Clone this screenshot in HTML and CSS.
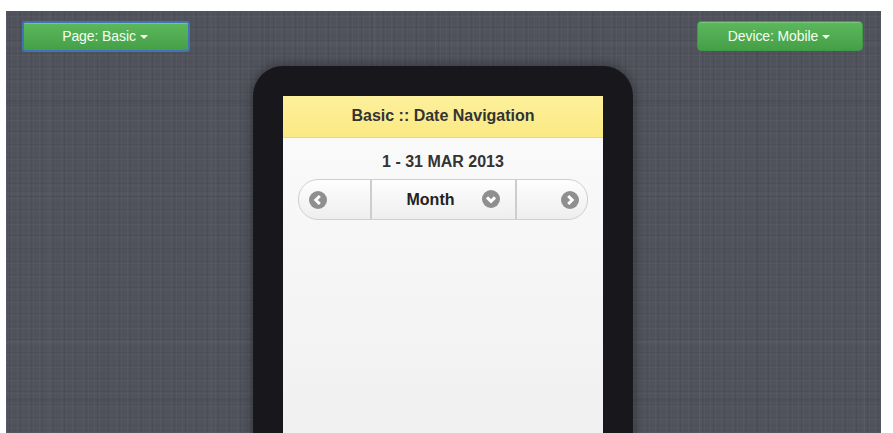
FILE: index.html
```html
<!DOCTYPE html>
<html lang="en">
<head>
<meta charset="utf-8">
<title>Date Navigation</title>
<link rel="stylesheet" href="styles.css">
</head>
<body>
<main class="stage">
  <div class="toolbar">
    <button class="drop drop-focus" type="button">Page: Basic<span class="caret"></span></button>
    <button class="drop" type="button">Device: Mobile<span class="caret"></span></button>
  </div>
  <div class="phone">
    <div class="screen">
      <header class="bar">Basic :: Date Navigation</header>
      <div class="content">
        <div class="range">1 - 31 MAR 2013</div>
        <div class="nav">
          <div class="cell cell-side">
            <svg class="ico" viewBox="0 0 18 18"><circle cx="9" cy="9" r="9"/><path d="M10.8 5 6.8 9l4 4"/></svg>
          </div>
          <div class="cell cell-mid">
            <span class="label">Month</span>
            <svg class="ico ico-mid" viewBox="0 0 18 18"><circle cx="9" cy="9" r="9"/><path d="M5 7.4l4 4 4-4"/></svg>
          </div>
          <div class="cell cell-side cell-end">
            <svg class="ico" viewBox="0 0 18 18"><circle cx="9" cy="9" r="9"/><path d="M7.2 5l4 4-4 4"/></svg>
          </div>
        </div>
      </div>
    </div>
  </div>
</main>
</body>
</html>
```
FILE: styles.css
```css
html, body { margin: 0; height: 433px; overflow: hidden; background: #fff; }
body { padding: 11px 12px 0 6px; box-sizing: border-box; font-family: "Liberation Sans", Arial, sans-serif; }
.stage {
  height: 422px; overflow: hidden; box-sizing: border-box; padding-top: 10px;
  background-color: #50525c;
  background-image:
    repeating-linear-gradient(90deg, rgba(255,255,255,.03) 0 1px, transparent 1px 3px, rgba(0,0,0,.05) 3px 4px, transparent 4px 5px, rgba(255,255,255,.02) 5px 6px, transparent 6px 11px),
    repeating-linear-gradient(0deg, rgba(255,255,255,.025) 0 1px, transparent 1px 2px, rgba(0,0,0,.05) 2px 3px, transparent 3px 7px, rgba(0,0,0,.03) 7px 8px, transparent 8px 13px),
    repeating-linear-gradient(90deg, transparent 0 41px, rgba(255,255,255,.02) 41px 44px, transparent 44px 97px, rgba(0,0,0,.025) 97px 101px, transparent 101px 163px),
    repeating-linear-gradient(0deg, transparent 0 31px, rgba(0,0,0,.03) 31px 35px, transparent 35px 89px, rgba(255,255,255,.02) 89px 92px, transparent 92px 149px);
}
.toolbar { display: flex; justify-content: space-between; align-items: flex-start; padding: 0 18px 0 16px; }
.drop {
  width: 166px; height: 30px; padding: 0 2px 0 0; border: 1px solid #3f9a45; border-radius: 4px;
  background: linear-gradient(#5cb85c, #459f48); color: #f2fff0;
  font: 14px/20px "Liberation Sans", Arial, sans-serif; letter-spacing: -.1px;
  box-shadow: inset 0 1px 0 rgba(255,255,255,.2);
}
.drop-focus { width: 168px; height: 31px; padding-bottom: 1px; border: 2px solid #3f74b5; border-radius: 3px; }
.caret {
  display: inline-block; margin-left: 4px; vertical-align: middle; width: 0; height: 0;
  border-left: 4.5px solid transparent; border-right: 4.5px solid transparent; border-top: 4.5px solid #f2fff0;
}
.phone {
  width: 320px; height: 420px; margin: 14px 0 0 247px; padding: 30px; background: #18181c;
  border-radius: 30px 30px 0 0; box-shadow: 0 0 12px rgba(0,0,0,.4);
}
.screen { height: 100%; background: linear-gradient(#fbfbfb, #f0f0f0 340px); }
.bar {
  height: 41px; line-height: 39px; text-align: center;
  background: linear-gradient(#fdf09c, #fbe982); border-bottom: 1px solid #efd968;
  color: #333; font-size: 16px; font-weight: 700;
}
.content { padding: 14px 15px 0 15px; }
.range { height: 27px; line-height: 20px; text-align: center; color: #333; font-size: 16px; font-weight: 700; }
.nav {
  display: flex; height: 39px; border: 1px solid #cfcfcf; border-radius: 20px;
  background: linear-gradient(#fefefe, #eeeeee); color: #222;
}
.cell { display: flex; align-items: center; box-sizing: border-box; }
.cell-side { width: 71px; padding-left: 10px; }
.cell-end { flex: 1; padding: 0 8px 0 0; justify-content: flex-end; }
.cell-mid {
  position: relative; width: 147px; justify-content: center;
  border-left: 2px solid #cdcdcd; border-right: 2px solid #cdcdcd;
  padding-right: 30px; padding-left: 4px;
}
.label { font-size: 16px; font-weight: 700; }
.ico { width: 18px; height: 18px; display: block; }
.ico circle { fill: #8f8f8f; }
.ico path { fill: none; stroke: #fff; stroke-width: 3; }
.ico-mid { position: absolute; right: 15px; top: 10px; }
```
